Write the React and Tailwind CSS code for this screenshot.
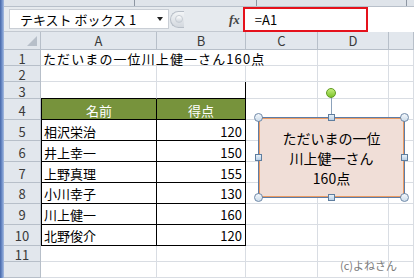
import React from "react";

const jp = "font-['Noto_Sans_CJK_JP','Noto_Sans_CJK_SC',sans-serif]";

const rows = [
  { n: 1, h: "h-[17px]", a: "ただいまの一位川上健一さん160点", b: "", kind: "title" },
  { n: 2, h: "h-[17px]", a: "", b: "", kind: "plain" },
  { n: 3, h: "h-[18px]", a: "", b: "", kind: "above" },
  { n: 4, h: "h-[22px]", a: "名前", b: "得点", kind: "head" },
  { n: 5, h: "h-[22px]", a: "相沢栄治", b: "120", kind: "data" },
  { n: 6, h: "h-[22px]", a: "井上幸一", b: "150", kind: "data" },
  { n: 7, h: "h-[22px]", a: "上野真理", b: "155", kind: "data" },
  { n: 8, h: "h-[22px]", a: "小川幸子", b: "130", kind: "data" },
  { n: 9, h: "h-[22px]", a: "川上健一", b: "160", kind: "data" },
  { n: 10, h: "h-[22px]", a: "北野俊介", b: "120", kind: "data" },
  { n: 11, h: "h-[17px]", a: "", b: "", kind: "plain" },
  { n: "", h: "h-[17px]", a: "", b: "", kind: "plain" },
];

const grid = "border-r border-b border-[#d9dde3]";
const hdr = "bg-[#e2e7ed] border-r border-b border-[#b7bfc9] text-[#3a3a3a] text-[13px] leading-none flex items-center justify-center";

function Row({ r }) {
  let aCls = "w-[116px] shrink-0 flex items-center text-[13px] text-black";
  let bCls = "w-[89px] shrink-0 flex items-center justify-end text-[13px] text-black pr-[3px]";
  if (r.kind === "title") {
    aCls += " border-b border-[#d9dde3] whitespace-nowrap pl-[2px] relative z-10 tracking-[1.1px]";
    bCls += " border-b border-[#d9dde3]";
  } else if (r.kind === "plain") {
    aCls += " " + grid;
    bCls += " " + grid;
  } else if (r.kind === "above") {
    aCls += " border-r border-[#d9dde3] border-b border-b-black";
    bCls += " border-r border-r-black border-b border-b-black";
  } else if (r.kind === "head") {
    aCls += " border-l border-r border-b border-black bg-[#77933c] text-white justify-center";
    bCls = "w-[89px] shrink-0 flex items-center justify-center text-[13px] text-white border-r border-b border-black bg-[#77933c]";
  } else {
    aCls += " border-l border-r border-b border-black pl-[2px]";
    bCls += " border-r border-b border-black";
  }
  return (
    <div className={"flex " + r.h}>
      <div className={"w-[37px] shrink-0 " + hdr}>
        <span className="pt-[2px]">{r.n}</span>
      </div>
      <div className={aCls}>
        <span className="pt-[2px] leading-none">{r.a}</span>
      </div>
      <div className={bCls}>
        <span className="pt-[2px] leading-none">{r.b}</span>
      </div>
      <div className={"w-[72px] shrink-0 " + (r.kind === "title" ? "border-r border-b border-[#d9dde3]" : grid)}></div>
      <div className={"w-[71px] shrink-0 " + grid}></div>
      <div className={"flex-1 " + grid}></div>
    </div>
  );
}

function Corner({ x, y }) {
  return (
    <div
      className="absolute w-[9px] h-[9px] rounded-full border border-[#6f89a8] bg-gradient-to-b from-[#f4f8fc] to-[#cddcea]"
      style={{ left: x - 4.5, top: y - 4.5 }}
    />
  );
}
function Square({ x, y }) {
  return (
    <div
      className="absolute w-[7px] h-[7px] border border-[#5f7e9f] bg-gradient-to-b from-[#e8f1f9] to-[#b9d0e6]"
      style={{ left: x - 3.5, top: y - 3.5 }}
    />
  );
}

export default function App() {
  return (
    <div className={"relative w-[414px] h-[278px] overflow-hidden bg-white flex " + jp}>
      <div className="w-[4px] shrink-0 bg-gradient-to-r from-[#4667a8] via-[#6f8fc9] to-[#a9bde0]"></div>
      <div className="flex-1 flex flex-col min-w-0">
        {/* top strip */}
        <div className="h-[7px] shrink-0 bg-[#dfe4ea] border-b border-[#b8c0ca] flex">
          <div className="w-[131px] border-r border-[#8d96a2]"></div>
          <div className="w-[122px] border-r border-[#8d96a2]"></div>
          <div className="w-[150px] border-r border-[#8d96a2]"></div>
        </div>
        {/* formula row */}
        <div className="h-[25px] shrink-0 bg-[#e6eaee] border-b border-[#c3c9d1] flex items-center">
          <div className="ml-[5px] w-[160px] h-[20px] bg-white border border-[#c9ced5] flex items-center pl-[10px] pr-[5px] text-[13px] text-black">
            <span className="leading-none flex-1 whitespace-nowrap">テキスト ボックス 1</span>
            <span className="w-0 h-0 border-l-[3.5px] border-r-[3.5px] border-t-[4px] border-l-transparent border-r-transparent border-t-[#222]"></span>
          </div>
          <div className="ml-[1px] w-[14px] h-[17px] rounded-l-full border border-r-0 border-[#b7bec7] bg-gradient-to-b from-[#f3f5f7] to-[#d3d8de] flex items-center justify-end pr-[1px]">
            <div className="w-[8px] h-[8px] rounded-full bg-gradient-to-b from-[#ffffff] to-[#cfd5dc] border border-[#c6ccd3]"></div>
          </div>
          <div className="w-[45px]"></div>
          <span className="font-['Liberation_Serif',serif] italic font-bold text-[13px] text-[#444] leading-none">fx</span>
          <div className="ml-[3px] flex-1 h-[25px] bg-white flex">
            <div className="w-[125px] h-[25px] border-2 border-[#e5121c] flex items-center pl-[10px] text-[13px] text-black">
              <span className="leading-none">=A1</span>
            </div>
          </div>
        </div>
        {/* column headers */}
        <div className="flex h-[18px] shrink-0">
          <div className={"w-[37px] shrink-0 " + hdr + " items-end justify-end pr-[3px] pb-[3px]"}>
            <svg width="10" height="10" viewBox="0 0 10 10">
              <polygon points="10,0 10,10 0,10" fill="#b7bfc9" />
            </svg>
          </div>
          <div className={"w-[116px] shrink-0 " + hdr}>A</div>
          <div className={"w-[89px] shrink-0 " + hdr}>B</div>
          <div className={"w-[72px] shrink-0 " + hdr}>C</div>
          <div className={"w-[71px] shrink-0 " + hdr}>D</div>
          <div className={"flex-1 " + hdr}></div>
        </div>
        {rows.map((r, i) => (
          <Row key={i} r={r} />
        ))}
      </div>

      {/* text box */}
      <div className="absolute left-[331px] top-[97px] w-[1px] h-[20px] bg-[#8ca2bb]"></div>
      <div className="absolute left-[326px] top-[88px] w-[10px] h-[10px] rounded-full border border-[#5f9a22] bg-gradient-to-b from-[#c4ef7a] to-[#7cc224]"></div>
      <div className="absolute left-[258px] top-[117px] w-[147px] h-[81px] bg-[#f0ded7] border border-[#5d7ca6] shadow-[inset_0_0_0_1px_#e99a62] flex flex-col items-center justify-center text-[14px] leading-[20px] text-black">
        <span>ただいまの一位</span>
        <span>川上健一さん</span>
        <span>160点</span>
      </div>
      <Corner x={258} y={117} />
      <Corner x={404} y={117} />
      <Corner x={258} y={197} />
      <Corner x={404} y={197} />
      <Square x={331} y={117} />
      <Square x={331} y={197} />
      <Square x={258} y={157} />
      <Square x={404} y={157} />

      <div className="absolute left-[340px] top-[258px] text-[11px] leading-[14px] text-[#7a7a7a] whitespace-nowrap">
        (c)よねさん
      </div>
    </div>
  );
}
